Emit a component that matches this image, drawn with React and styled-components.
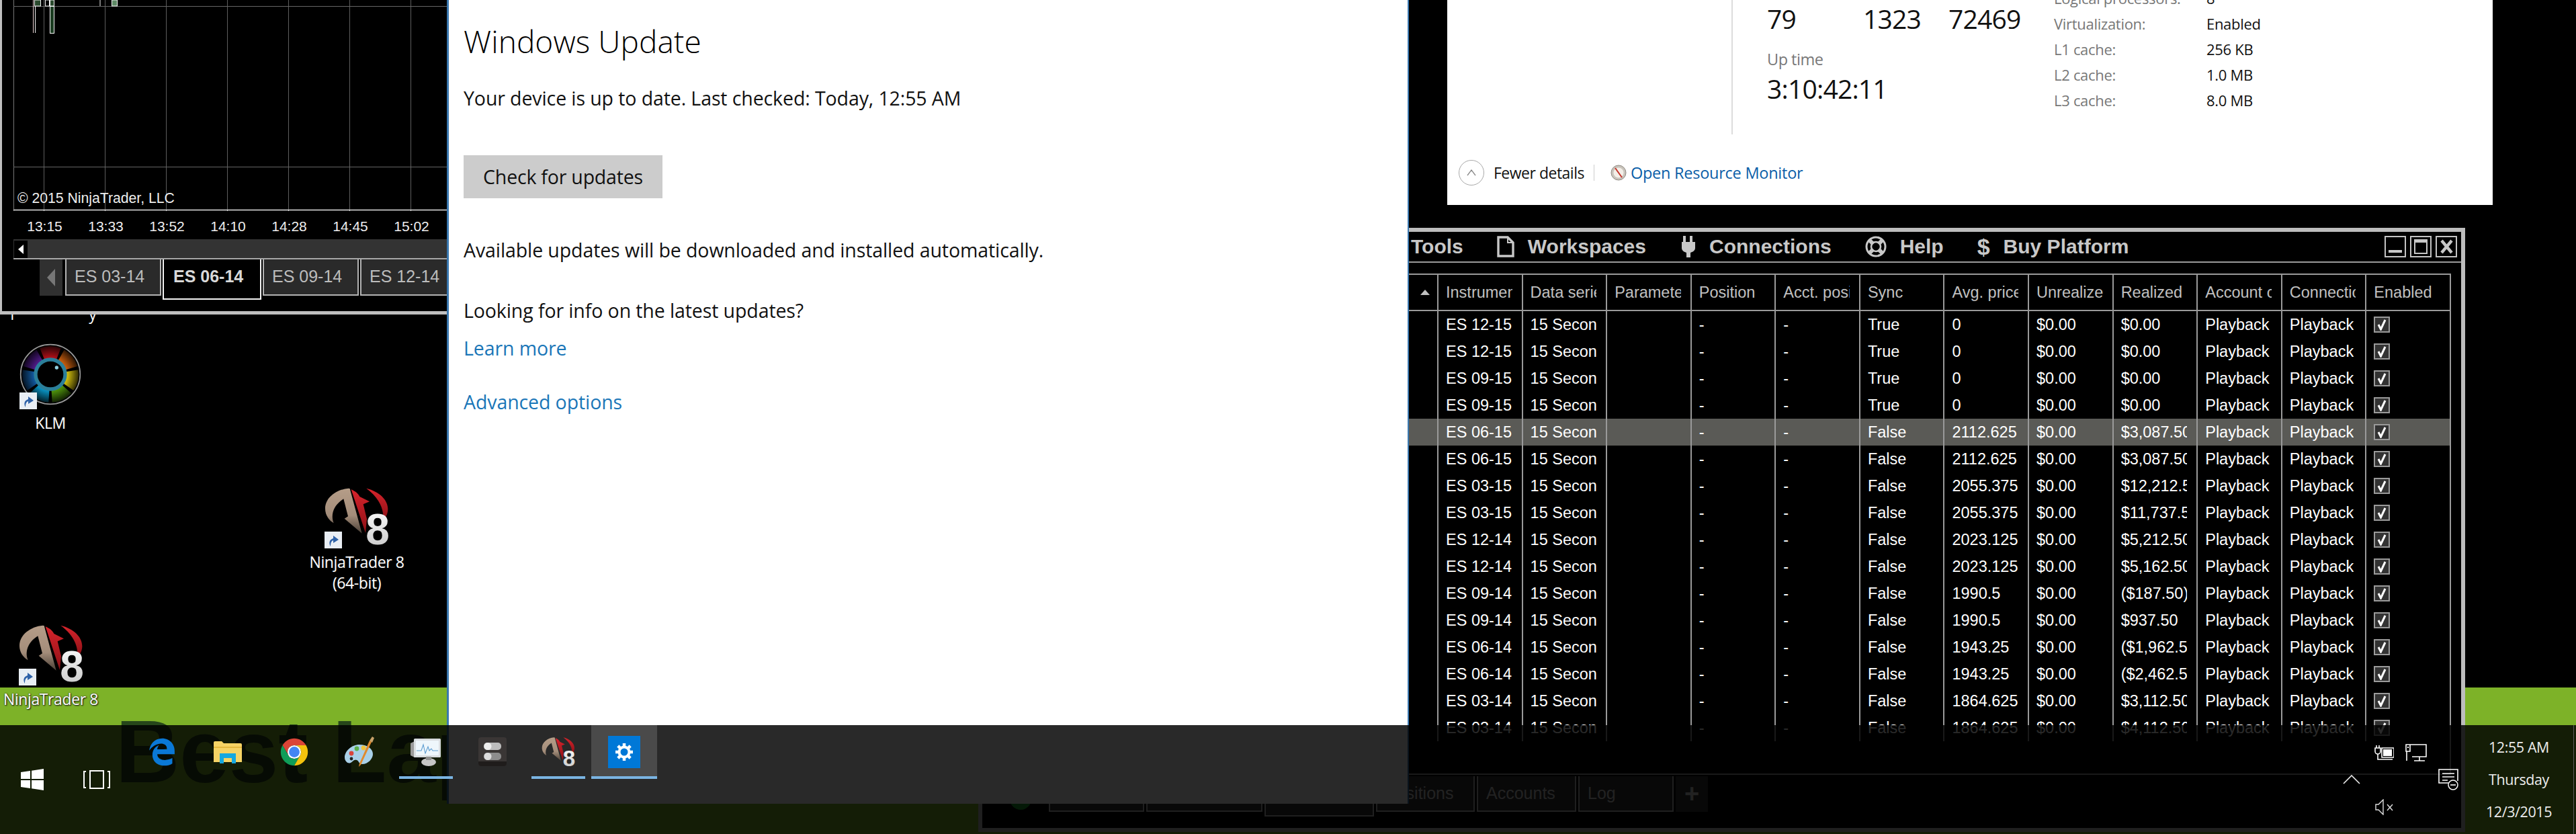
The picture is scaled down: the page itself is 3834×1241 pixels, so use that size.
import React from "react";
import styled, { createGlobalStyle } from "styled-components";
import { FaEdgeLegacy } from "react-icons/fa";

const GlobalStyle = createGlobalStyle`
  html, body {
    margin: 0;
    padding: 0;
    background: #000;
  }
  * {
    box-sizing: border-box;
  }
`;

const SEGOE = `"Open Sans", "Noto Sans", sans-serif`;
const ARIAL = `"Liberation Sans", Arial, sans-serif`;

const TIMES = ["13:15", "13:33", "13:52", "14:10", "14:28", "14:45", "15:02"];

const COLUMNS = [
  "Instrument",
  "Data series",
  "Parameters",
  "Position",
  "Acct. position",
  "Sync",
  "Avg. price",
  "Unrealized",
  "Realized",
  "Account connection",
  "Connection",
  "Enabled",
];

const ROWS = [
  ["ES 12-15", "True", "0", "$0.00"],
  ["ES 12-15", "True", "0", "$0.00"],
  ["ES 09-15", "True", "0", "$0.00"],
  ["ES 09-15", "True", "0", "$0.00"],
  ["ES 06-15", "False", "2112.625", "$3,087.50"],
  ["ES 06-15", "False", "2112.625", "$3,087.50"],
  ["ES 03-15", "False", "2055.375", "$12,212.50"],
  ["ES 03-15", "False", "2055.375", "$11,737.50"],
  ["ES 12-14", "False", "2023.125", "$5,212.50"],
  ["ES 12-14", "False", "2023.125", "$5,162.50"],
  ["ES 09-14", "False", "1990.5", "($187.50)"],
  ["ES 09-14", "False", "1990.5", "$937.50"],
  ["ES 06-14", "False", "1943.25", "($1,962.50)"],
  ["ES 06-14", "False", "1943.25", "($2,462.50)"],
  ["ES 03-14", "False", "1864.625", "$3,112.50"],
  ["ES 03-14", "False", "1864.625", "$4,112.50"],
];

const SPECS = [
  ["Logical processors:", "8"],
  ["Virtualization:", "Enabled"],
  ["L1 cache:", "256 KB"],
  ["L2 cache:", "1.0 MB"],
  ["L3 cache:", "8.0 MB"],
];

function ShortcutBadge() {
  return (
    <Badge>
      <svg width="20" height="20" viewBox="0 0 20 20">
        <path d="M6 19c-3-5-2-10 4-12V3l8 6-8 5v-4c-3 1-4 4-4 9z" fill="#2f62a8" />
      </svg>
    </Badge>
  );
}

function KlmLogo() {
  const colors = ["#c8121c", "#e36a10", "#f2dc10", "#5aa80e", "#0aa6dc", "#1464b4", "#5a1e9a"];
  const wedge = (i) => {
    const a0 = ((i * 360) / 7 - 90 - 22) * (Math.PI / 180);
    const a1 = ((i * 360) / 7 - 90 + 22) * (Math.PI / 180);
    const p = (r, a) => `${(r * Math.cos(a)).toFixed(1)} ${(r * Math.sin(a)).toFixed(1)}`;
    return `M${p(60, a0)} L${p(126, a0)} A126 126 0 0 1 ${p(126, a1)} L${p(60, a1)} Z`;
  };
  return (
    <svg width="92" height="94" viewBox="-138 -141 276 282">
      <defs>
        <radialGradient id="klmFade" cx="0" cy="0" r="130" gradientUnits="userSpaceOnUse">
          <stop offset="0.5" stopColor="#000" stopOpacity="0" />
          <stop offset="1" stopColor="#000" stopOpacity="0.85" />
        </radialGradient>
      </defs>
      <circle r="133" fill="#000" stroke="#9a9a9a" strokeWidth="5" />
      {colors.map((c, i) => (
        <path key={c} d={wedge(i)} fill={c} />
      ))}
      <circle r="128" fill="url(#klmFade)" />
      <circle r="66" fill="#000" stroke="#2b7f9a" strokeWidth="16" />
      <circle cx="28" cy="-30" r="8" fill="#8fd0e0" />
    </svg>
  );
}

function NinjaLogo({ width = 96, height = 85 }) {
  return (
    <svg width={width} height={height} viewBox="39 33 288 255">
      <defs>
        <linearGradient id="ntTaupe" x1="0" y1="0" x2="0" y2="1">
          <stop offset="0" stopColor="#b59d88" />
          <stop offset="0.6" stopColor="#a48d7a" />
          <stop offset="1" stopColor="#4a3f36" />
        </linearGradient>
        <linearGradient id="ntRed" x1="0" y1="0" x2="0" y2="1">
          <stop offset="0" stopColor="#d8242c" />
          <stop offset="1" stopColor="#8c1016" />
        </linearGradient>
        <linearGradient id="ntEight" x1="0" y1="0" x2="0" y2="1">
          <stop offset="0" stopColor="#ffffff" />
          <stop offset="1" stopColor="#c4c4c4" />
        </linearGradient>
      </defs>
      <path
        d="M146 35C92 40 42 76 42 126c0 26 14 50 38 64-14-34-4-78 44-108l20 78-16 10 78 66L152 36z"
        fill="url(#ntTaupe)"
      />
      <path d="M158 40c18 8 32 18 38 32l44 22-28 12 16 66-6 62z" fill="url(#ntRed)" />
      <path d="M226 35c58 14 96 52 96 92 0 20-8 38-22 48 6-42-14-96-74-140z" fill="url(#ntRed)" />
      <text x="276" y="284" textAnchor="middle" fontFamily={ARIAL} fontWeight="700" fontSize="192" fill="url(#ntEight)">
        8
      </text>
    </svg>
  );
}

function Chrome() {
  return (
    <svg width="44" height="44" viewBox="0 0 48 48">
      <path d="M43.05 13A22 22 0 0 0 4.95 13L14.47 29.5A11 11 0 0 1 24 13Z" fill="#db4437" />
      <path d="M4.95 13A22 22 0 0 0 24 46L33.53 29.5A11 11 0 0 1 14.47 29.5Z" fill="#0f9d58" />
      <path d="M24 46A22 22 0 0 0 43.05 13H24A11 11 0 0 1 33.53 29.5Z" fill="#f4c20d" />
      <circle cx="24" cy="24" r="11" fill="#fff" />
      <circle cx="24" cy="24" r="8.6" fill="#4285f4" />
    </svg>
  );
}

function Explorer() {
  return (
    <svg width="42" height="34" viewBox="0 0 42 34">
      <path d="M0 3a2 2 0 0 1 2-2h10l3 3h25a2 2 0 0 1 2 2v26H0z" fill="#f6d365" />
      <path d="M0 9h42v2H0z" fill="#e5b93f" />
      <path d="M9 34V19h24v15h-6v-8H15v8z" fill="#16a8e0" />
    </svg>
  );
}

function Palette() {
  return (
    <svg width="46" height="46" viewBox="0 0 46 46">
      <path
        d="M22 12C10 12 0 22 0 31c0 6 5 10 9 8s4-5 9-4c3 1 3 6 8 6 9 0 16-8 16-15 0-8-9-14-20-14z"
        fill="#a9d0e8"
      />
      <circle cx="10" cy="25" r="3.4" fill="#d9453c" />
      <circle cx="18" cy="18" r="3.4" fill="#5cb04d" />
      <circle cx="28" cy="17" r="3.4" fill="#f0c33a" />
      <circle cx="10" cy="33" r="2.4" fill="#222" />
      <path d="M40 8L24 42l-3 3 1-5L37 6z" fill="#e08a2e" />
      <path d="M37 6l4-6 3 2-3 7z" fill="#c9a36a" />
    </svg>
  );
}

function Monitor() {
  return (
    <svg width="46" height="42" viewBox="0 0 46 42">
      <path d="M0 8l6-3v24l-6-3z" fill="#9a9a9a" />
      <rect x="5" y="1" width="40" height="28" rx="1.5" fill="#d9dde0" />
      <rect x="8" y="4" width="34" height="22" fill="#eef6fb" />
      <path d="M9 19h7l3-9 3 13 4-10 2 6 3-3 2 3h8" fill="none" stroke="#5b9bd0" strokeWidth="1.1" />
      <ellipse cx="27" cy="36" rx="11" ry="6" fill="#c6c6c6" />
      <rect x="23" y="28" width="8" height="5" fill="#8f8f8f" />
    </svg>
  );
}

function TaskSwitch() {
  return (
    <svg width="42" height="44" viewBox="0 0 42 44">
      <rect x="0" y="0" width="42" height="43" rx="4" fill="#3a3635" />
      <path d="M0 36h42v3a4 4 0 0 1-4 4H4a4 4 0 0 1-4-4z" fill="#1f1c1b" />
      <rect x="8" y="8" width="26" height="11" rx="5" fill="#bdbdbd" />
      <rect x="8" y="23" width="26" height="11" rx="5" fill="#8d8d8d" />
      <circle cx="14" cy="13.5" r="5.5" fill="#eee" />
      <circle cx="14" cy="28.5" r="5.5" fill="#ddd" />
    </svg>
  );
}

function Gear() {
  return (
    <svg width="26" height="26" viewBox="0 0 26 26">
      <g fill="none" stroke="#fff">
        <circle cx="13" cy="13" r="7.5" strokeWidth="4" />
        <path
          d="M13 0v5M13 21v5M0 13h5M21 13h5M3.8 3.8l3.5 3.5M18.7 18.7l3.5 3.5M3.8 22.2l3.5-3.5M18.7 7.3l3.5-3.5"
          strokeWidth="4.5"
        />
      </g>
    </svg>
  );
}

function Check() {
  return (
    <svg width="14" height="17" viewBox="0 0 14 17">
      <path d="M2 8l3.5 7L12 1" fill="none" stroke="#fff" strokeWidth="3" />
    </svg>
  );
}

function App() {
  return (
    <Desktop>
      <GlobalStyle />
      <WallText>Best Lap</WallText>

      <DesktopIcon $x={20} $y={510} $w={110}>
        <IconArt>
          <KlmLogo />
          <ShortcutBadge />
        </IconArt>
        <IconLabel>KLM</IconLabel>
      </DesktopIcon>
      <DesktopIcon $x={461} $y={726} $w={140}>
        <IconArt>
          <NinjaLogo />
          <ShortcutBadge />
        </IconArt>
        <IconLabel>
          NinjaTrader 8
          <br />
          (64-bit)
        </IconLabel>
      </DesktopIcon>
      <DesktopIcon $x={5} $y={930} $w={141}>
        <IconArt>
          <NinjaLogo />
          <ShortcutBadge />
        </IconArt>
        <IconLabel>NinjaTrader 8</IconLabel>
      </DesktopIcon>

      <PeekLabel>T&nbsp;&nbsp;&nbsp;&nbsp;&nbsp;&nbsp;&nbsp;&nbsp;&nbsp;&nbsp;&nbsp;&nbsp;&nbsp;&nbsp;&nbsp;&nbsp;&nbsp;&nbsp;y</PeekLabel>

      <ChartWindow>
        <ChartPlot>
          <svg width="780" height="314">
            {[0, 1, 2, 3, 4, 5, 6].map((i) => (
              <g key={i}>
                <line x1={45.5 + i * 91} x2={45.5 + i * 91} y1="0" y2="312" stroke="#5e5e5e" />
                <line x1={45.5 + i * 91} x2={45.5 + i * 91} y1="312" y2="314" stroke="#ddd" />
              </g>
            ))}
            <line x1="0.5" x2="0.5" y1="0" y2="314" stroke="#777" />
            <line x1="0" x2="780" y1="9.5" y2="9.5" stroke="#666" />
            <line x1="0" x2="780" y1="248.5" y2="248.5" stroke="#666" />
            <line x1="0" x2="780" y1="312.5" y2="312.5" stroke="#e4e4e4" strokeWidth="1.5" />
            <path d="M29.5 0v49" fill="none" stroke="#e8d0d0" />
            <path d="M32.5 9v40" fill="none" stroke="#f4f4f4" />
            <rect x="31.500" y="0" width="9" height="9" fill="#2a4a2e" stroke="#f4f4f4" />
            <rect x="47.500" y="0" width="6" height="9" fill="#000" stroke="#f4f4f4" />
            <rect x="54.500" y="0" width="6" height="9" fill="#2a4a2e" stroke="#f4f4f4" />
            <rect x="54.500" y="9.500" width="6" height="40" fill="#1c3d22" stroke="#f4f4f4" />
            <path d="M129 0v9" stroke="#eee" fill="none" />
            <rect x="146.500" y="0" width="8" height="9" fill="#5f8a66" stroke="#f4f4f4" />
          </svg>
          <Copyright>© 2015 NinjaTrader, LLC</Copyright>
        </ChartPlot>
        <AxisRow>
          {TIMES.map((t) => (
            <AxisTime key={t}>{t}</AxisTime>
          ))}
        </AxisRow>
        <ScrollTrack>
          <ScrollButton>
            <svg width="8" height="14" viewBox="0 0 8 14">
              <path d="M8 0v14L0 7z" fill="#fff" />
            </svg>
          </ScrollButton>
        </ScrollTrack>
        <ChartTabs>
          <TabArrow>
            <svg width="12" height="26" viewBox="0 0 12 26">
              <path d="M12 0v26L0 13z" fill="#777" />
            </svg>
          </TabArrow>
          <ChartTab>ES 03-14</ChartTab>
          <ChartTab $active>ES 06-14</ChartTab>
          <ChartTab>ES 09-14</ChartTab>
          <ChartTab $wide>ES 12-14</ChartTab>
        </ChartTabs>
      </ChartWindow>

      <TaskManager>
        <PerfGrid>
          <SideColumn />
          <StatsColumn>
            <Counters>
              <BigValue>79</BigValue>
              <BigValue>1323</BigValue>
              <BigValue>72469</BigValue>
            </Counters>
            <StatLabel>Up time</StatLabel>
            <BigValue>3:10:42:11</BigValue>
          </StatsColumn>
          <SpecList>
            {SPECS.map(([k, v]) => (
              <SpecRow key={k}>
                <SpecKey>{k}</SpecKey>
                <SpecValue>{v}</SpecValue>
              </SpecRow>
            ))}
          </SpecList>
        </PerfGrid>
        <TmFooter>
          <FewerCircle>
            <svg width="14" height="10" viewBox="0 0 14 10">
              <path d="M1 9l6-8 6 8" fill="none" stroke="#888" strokeWidth="1.3" />
            </svg>
          </FewerCircle>
          <FewerText>Fewer details</FewerText>
          <FooterSep />
          <svg width="24" height="24" viewBox="0 0 24 24">
            <circle cx="12" cy="12" r="11" fill="#c9c4bc" stroke="#8f8a82" />
            <circle cx="12" cy="12" r="7.5" fill="#f3efe8" />
            <path d="M7 5l10 14" stroke="#c4352c" strokeWidth="2" />
          </svg>
          <MonitorLink>Open Resource Monitor</MonitorLink>
        </TmFooter>
      </TaskManager>

      <ControlCenter>
        <TitleBar>
          <MenuItem>Tools</MenuItem>
          <MenuItem>
            <svg width="26" height="32" viewBox="0 0 26 32">
              <path d="M2 2h14l8 8v20H2z" fill="none" stroke="#c8c8c8" strokeWidth="3.4" />
              <path d="M16 2v8h8" fill="none" stroke="#c8c8c8" strokeWidth="2" />
            </svg>
            Workspaces
          </MenuItem>
          <MenuItem>
            <svg width="24" height="32" viewBox="0 0 24 32">
              <path
                d="M5 0h4v9h6V0h4v9h4v9c0 4-4 6-7 7v7H10v-7c-3-1-7-3-7-7V9h2z"
                fill="#c8c8c8"
              />
            </svg>
            Connections
          </MenuItem>
          <MenuItem>
            <svg width="32" height="32" viewBox="0 0 32 32">
              <circle cx="16" cy="16" r="14" fill="none" stroke="#c8c8c8" strokeWidth="3" />
              <circle cx="16" cy="16" r="7" fill="none" stroke="#c8c8c8" strokeWidth="2.6" />
              <path d="M6 6l6 6M26 6l-6 6M6 26l6-6M26 26l-6-6" stroke="#c8c8c8" strokeWidth="6" />
            </svg>
            Help
          </MenuItem>
          <MenuItem>
            <DollarMark>$</DollarMark>
            Buy Platform
          </MenuItem>
          <WindowButtons>
            <WindowButton>
              <MinimizeBar />
            </WindowButton>
            <WindowButton>
              <MaximizeBox />
            </WindowButton>
            <WindowButton>
              <svg width="19" height="22" viewBox="0 0 19 22">
                <path d="M2 2l15 18M17 2L2 20" stroke="#c8c8c8" strokeWidth="4.4" />
              </svg>
            </WindowButton>
          </WindowButtons>
        </TitleBar>

        <GridFrame>
          <HeaderRow>
            <SortCell>
              <svg width="14" height="8" viewBox="0 0 14 8">
                <path d="M7 0l7 8H0z" fill="#c0c0c0" />
              </svg>
            </SortCell>
            {COLUMNS.map((c) => (
              <Cell key={c} $header>
                <CellText>{c}</CellText>
              </Cell>
            ))}
          </HeaderRow>
          <GridBody>
            {ROWS.map(([inst, sync, avg, realized], i) => (
              <DataRow key={i} $selected={i === 4}>
                <SortCell />
                <Cell>
                  <CellText>{inst}</CellText>
                </Cell>
                <Cell>
                  <CellText>15 Second</CellText>
                </Cell>
                <Cell />
                <Cell>
                  <CellText>-</CellText>
                </Cell>
                <Cell>
                  <CellText>-</CellText>
                </Cell>
                <Cell>
                  <CellText>{sync}</CellText>
                </Cell>
                <Cell>
                  <CellText>{avg}</CellText>
                </Cell>
                <Cell>
                  <CellText>$0.00</CellText>
                </Cell>
                <Cell>
                  <CellText>{realized}</CellText>
                </Cell>
                <Cell>
                  <CellText>Playback</CellText>
                </Cell>
                <Cell>
                  <CellText>Playback</CellText>
                </Cell>
                <Cell>
                  <CheckBox>
                    <Check />
                  </CheckBox>
                </Cell>
              </DataRow>
            ))}
          </GridBody>
        </GridFrame>

        <BottomTabs>
          <StatusDot />
          <BottomTab $w={142}>Orders</BottomTab>
          <BottomTab $w={173}>Executions</BottomTab>
          <BottomTab $w={163} $active>
            Strategies
          </BottomTab>
          <BottomTab $w={147}>Positions</BottomTab>
          <BottomTab $w={148}>Accounts</BottomTab>
          <BottomTab $w={142}>Log</BottomTab>
          <PlusTab>+</PlusTab>
        </BottomTabs>
      </ControlCenter>

      <SettingsWindow>
        <SettingsTitle>Windows Update</SettingsTitle>
        <SettingsText $mt={40}>Your device is up to date. Last checked: Today, 12:55 AM</SettingsText>
        <CheckButton>Check for updates</CheckButton>
        <SettingsText $mt={57}>Available updates will be downloaded and installed automatically.</SettingsText>
        <SettingsText $mt={50}>Looking for info on the latest updates?</SettingsText>
        <SettingsLink $mt={16}>Learn more</SettingsLink>
        <SettingsLink $mt={40}>Advanced options</SettingsLink>
      </SettingsWindow>

      <Taskbar>
        <StartGroup>
          <StartCell>
            <svg width="34" height="32" viewBox="0 0 34 32">
              <path d="M0 5l14-2v12H0zM16 2.700L34 0v15H16zM0 17h14v12L0 27zM16 17h18v15l-18-2.700z" fill="#fff" />
            </svg>
          </StartCell>
          <StartCell>
            <svg width="40" height="28" viewBox="0 0 40 28">
              <path
                d="M4 2H1v24h3M36 2h3v24h-3M10 1h20v26H10z"
                fill="none"
                stroke="#fff"
                strokeWidth="2"
              />
            </svg>
          </StartCell>
        </StartGroup>
        <AppGroup>
          <AppTile>
            <FaEdgeLegacy size={42} color="#0a78d6" />
          </AppTile>
          <AppTile>
            <Explorer />
          </AppTile>
          <AppTile>
            <Chrome />
          </AppTile>
          <AppTile>
            <Palette />
          </AppTile>
          <AppTile $running>
            <Monitor />
          </AppTile>
          <AppTile>
            <TaskSwitch />
          </AppTile>
          <AppTile $running>
            <NinjaLogo width={50} height={44} />
          </AppTile>
          <AppTile $running $active>
            <GearTile>
              <Gear />
            </GearTile>
          </AppTile>
        </AppGroup>
        <Tray>
          <CaretCell>
            <svg width="26" height="14" viewBox="0 0 26 14">
              <path d="M1 13L13 1l12 12" fill="none" stroke="#eee" strokeWidth="1.6" />
            </svg>
          </CaretCell>
          <TrayIcons>
            <TrayIcon>
              <svg width="30" height="22" viewBox="0 0 30 22">
                <path d="M4 0v4M8 0v4M2 4h8v5a4 4 0 0 1-8 0zM6 13v8h22" fill="none" stroke="#fff" strokeWidth="1.6" />
                <path d="M12 4h18v14H12z" fill="none" stroke="#fff" strokeWidth="1.6" />
                <rect x="14" y="6" width="13" height="10" fill="#fff" />
              </svg>
            </TrayIcon>
            <TrayIcon>
              <svg width="32" height="26" viewBox="0 0 32 26">
                <path d="M7 1h24v18H10M1 1h6v10H1zM2 11v14M21 19v6M13 25h16" fill="none" stroke="#fff" strokeWidth="1.6" />
                <rect x="3" y="4" width="2" height="2" fill="#fff" />
              </svg>
            </TrayIcon>
            <TrayIcon>
              <svg width="27" height="24" viewBox="0 0 27 24">
                <path d="M1 8h4l7-7v22l-7-7H1z" fill="none" stroke="#ddd" strokeWidth="1.4" />
                <path d="M18 8l8 9M26 8l-8 9" stroke="#ddd" strokeWidth="1.4" />
              </svg>
            </TrayIcon>
          </TrayIcons>
          <ActionCell>
            <svg width="30" height="32" viewBox="0 0 30 32">
              <path d="M21 21H1V1h28v17" fill="none" stroke="#fff" strokeWidth="1.6" />
              <path d="M6 7h18M6 12h18M6 17h8" stroke="#fff" strokeWidth="1.6" />
              <circle cx="22" cy="24" r="7" fill="#000" stroke="#fff" strokeWidth="1.5" />
              <path d="M18 24h8" stroke="#fff" strokeWidth="1.6" />
            </svg>
          </ActionCell>
          <Clock>
            <ClockLine>12:55 AM</ClockLine>
            <ClockLine>Thursday</ClockLine>
            <ClockLine>12/3/2015</ClockLine>
          </Clock>
        </Tray>
      </Taskbar>
    </Desktop>
  );
}

const Desktop = styled.div`
  position: relative;
  width: 3834px;
  height: 1241px;
  overflow: hidden;
  background: linear-gradient(#000 1023px, #7db228 1023px);
`;

const WallText = styled.div`
  position: absolute;
  left: 172px;
  top: 1044px;
  font: 700 132px/150px ${ARIAL};
  color: #26461a;
  white-space: nowrap;
`;

const DesktopIcon = styled.div`
  position: absolute;
  left: ${(p) => p.$x}px;
  top: ${(p) => p.$y}px;
  width: ${(p) => p.$w}px;
  display: flex;
  flex-direction: column;
  align-items: center;
`;

const IconArt = styled.div`
  position: relative;
  display: flex;
`;

const Badge = styled.div`
  position: absolute;
  left: 0;
  bottom: -5px;
  width: 26px;
  height: 25px;
  display: flex;
  align-items: center;
  justify-content: center;
  background: #e9eef4;
`;

const IconLabel = styled.div`
  margin-top: 10px;
  font: 400 23px/31px ${SEGOE};
  letter-spacing: -0.4px;
  color: #fff;
  text-align: center;
  white-space: nowrap;
  text-shadow: 1px 1px 2px #111, 0 0 2px #222;
`;

const PeekLabel = styled.div`
  position: absolute;
  left: 12px;
  top: 452px;
  font: 400 23px/30px ${SEGOE};
  color: #fff;
  white-space: nowrap;
`;

const ChartWindow = styled.div`
  position: absolute;
  left: 0;
  top: 0;
  width: 800px;
  height: 468px;
  padding-left: 17px;
  border-left: 3px solid #bfbfbf;
  border-bottom: 5px solid #bfbfbf;
  background: #000;
  display: flex;
  flex-direction: column;
`;

const ChartPlot = styled.div`
  position: relative;
  height: 312px;
  flex: none;
  svg {
    display: block;
    height: 314px;
  }
`;

const Copyright = styled.div`
  position: absolute;
  left: 6px;
  top: 282px;
  font: 400 21.200px/26px ${ARIAL};
  color: #eee;
  white-space: nowrap;
`;

const AxisRow = styled.div`
  height: 44px;
  flex: none;
  display: flex;
`;

const AxisTime = styled.div`
  width: 91px;
  flex: none;
  padding: 7px 0 0 2px;
  text-align: center;
  font: 400 21px/36px ${ARIAL};
  color: #eee;
`;

const ScrollTrack = styled.div`
  height: 30px;
  flex: none;
  padding: 2px 0 0 1px;
  background: #333;
  border-bottom: 2px solid #a8a8a8;
  display: flex;
`;

const ScrollButton = styled.div`
  width: 20px;
  height: 26px;
  display: flex;
  align-items: center;
  justify-content: center;
  background: #000;
`;

const ChartTabs = styled.div`
  display: flex;
  align-items: flex-start;
  padding-left: 39px;
  flex: none;
`;

const TabArrow = styled.div`
  width: 34px;
  height: 54px;
  margin-right: 4px;
  display: flex;
  align-items: center;
  justify-content: center;
  background: #303030;
`;

const ChartTab = styled.div`
  height: ${(p) => (p.$active ? "60px" : "54px")};
  width: ${(p) => (p.$active ? "147px" : p.$wide ? "260px" : "143px")};
  margin-right: 2px;
  padding: ${(p) => (p.$active ? "9px 0 0 14px" : "9px 0 0 12px")};
  border: 2px solid ${(p) => (p.$active ? "#f4f4f4" : "#b4b4b4")};
  border-top: none;
  background: ${(p) => (p.$active ? "#000" : "#2a2a2a")};
  font: ${(p) => (p.$active ? 700 : 400)} 25px/32px ${ARIAL};
  color: ${(p) => (p.$active ? "#d8d8d8" : "#bcbcbc")};
  white-space: nowrap;
  overflow: hidden;
`;

const TaskManager = styled.div`
  position: absolute;
  left: 2154px;
  top: -22px;
  width: 1556px;
  height: 327px;
  background: #fff;
  display: flex;
  flex-direction: column;
  overflow: hidden;
`;

const PerfGrid = styled.div`
  display: flex;
  height: 222px;
  flex: none;
`;

const SideColumn = styled.div`
  width: 425px;
  flex: none;
  border-right: 2px solid #dcdcdc;
`;

const StatsColumn = styled.div`
  width: 478px;
  flex: none;
  padding: 27px 0 0 51px;
`;

const Counters = styled.div`
  display: grid;
  grid-template-columns: 143px 127px auto;
`;

const BigValue = styled.div`
  font: 400 39px/46px ${SEGOE};
  letter-spacing: -0.8px;
  color: #111;
  white-space: nowrap;
`;

const StatLabel = styled.div`
  margin-top: 22px;
  margin-bottom: 6px;
  font: 400 23.500px/30px ${SEGOE};
  letter-spacing: -0.500px;
  color: #777;
`;

const SpecList = styled.div`
  display: flex;
  flex-direction: column;
`;

const SpecRow = styled.div`
  height: 38px;
  display: flex;
  align-items: center;
  font: 400 22px/38px ${SEGOE};
  letter-spacing: -0.300px;
  white-space: nowrap;
`;

const SpecKey = styled.div`
  width: 227px;
  color: #777;
`;

const SpecValue = styled.div`
  color: #111;
`;

const TmFooter = styled.div`
  display: flex;
  align-items: center;
  height: 38px;
  margin-top: 38px;
  padding-left: 17px;
`;

const FewerCircle = styled.div`
  width: 38px;
  height: 38px;
  border: 1.500px solid #a8a8a8;
  border-radius: 50%;
  display: flex;
  align-items: center;
  justify-content: center;
`;

const FewerText = styled.div`
  margin-left: 14px;
  font: 400 23px/38px ${SEGOE};
  letter-spacing: -0.500px;
  color: #111;
  white-space: nowrap;
`;

const FooterSep = styled.div`
  width: 1px;
  height: 24px;
  margin: 0 24px 0 14px;
  background: #ccc;
`;

const MonitorLink = styled.div`
  margin-left: 6px;
  font: 400 23.500px/38px ${SEGOE};
  letter-spacing: -0.250px;
  color: #0a5ea8;
  white-space: nowrap;
`;

const ControlCenter = styled.div`
  position: absolute;
  left: 1456px;
  top: 339px;
  width: 2213px;
  height: 899px;
  border: 6px solid #bdbdbd;
  background: #000;
  display: flex;
  flex-direction: column;
`;

const TitleBar = styled.div`
  height: 46px;
  flex: none;
  padding-left: 638px;
  border-bottom: 2px solid #9a9a9a;
  display: flex;
  align-items: center;
  gap: 50px;
`;

const MenuItem = styled.div`
  display: flex;
  align-items: center;
  gap: 20px;
  font: 700 30px/38px ${ARIAL};
  color: #c8c8c8;
  white-space: nowrap;
`;

const DollarMark = styled.span`
  font: 700 34px/38px ${ARIAL};
`;

const WindowButtons = styled.div`
  margin-left: auto;
  padding-right: 6px;
  display: flex;
  gap: 6px;
`;

const WindowButton = styled.div`
  width: 32px;
  height: 32px;
  border: 2px solid #c4c4c4;
  display: flex;
  align-items: center;
  justify-content: center;
`;

const MinimizeBar = styled.div`
  width: 20px;
  height: 4px;
  margin-top: 14px;
  background: #c8c8c8;
`;

const MaximizeBox = styled.div`
  width: 20px;
  height: 22px;
  border: 2px solid #c8c8c8;
  border-top-width: 5px;
`;

const GridFrame = styled.div`
  height: 746px;
  margin: 16px 15px 0 0;
  flex: none;
  border-top: 2px solid #9a9a9a;
  border-right: 2px solid #9a9a9a;
  border-bottom: 2px solid #9a9a9a;
  display: flex;
  flex-direction: column;
`;

const HeaderRow = styled.div`
  height: 54px;
  flex: none;
  display: grid;
  grid-template-columns: 677px repeat(12, 125.580px);
  border-bottom: 2px solid #9a9a9a;
`;

const GridBody = styled.div`
  height: 640px;
  flex: none;
  overflow: hidden;
`;

const DataRow = styled.div`
  height: 40px;
  display: grid;
  grid-template-columns: 677px repeat(12, 125.580px);
  background: ${(p) => (p.$selected ? "#5a5a56" : "transparent")};
`;

const SortCell = styled.div`
  display: flex;
  align-items: center;
  justify-content: flex-end;
  padding-right: 11px;
`;

const Cell = styled.div`
  min-width: 0;
  padding: 0 14px 0 11px;
  border-left: 2px solid #9a9a9a;
  display: flex;
  align-items: center;
  font: 400 23.500px/40px ${ARIAL};
  color: ${(p) => (p.$header ? "#c0c0c0" : "#fff")};
`;

const CellText = styled.div`
  overflow: hidden;
  white-space: nowrap;
`;

const CheckBox = styled.div`
  width: 24px;
  height: 24px;
  border: 2px solid #9a9a9a;
  background: #333;
  display: flex;
  align-items: center;
  justify-content: center;
`;

const BottomTabs = styled.div`
  display: flex;
  align-items: flex-start;
  margin-top: 2px;
  padding-left: 41px;
`;

const StatusDot = styled.div`
  width: 32px;
  height: 32px;
  margin: 18px 26px 0 0;
  border-radius: 50%;
  background: #1a9a30;
`;

const BottomTab = styled.div`
  width: ${(p) => p.$w}px;
  height: ${(p) => (p.$active ? "60px" : "53px")};
  margin-right: 3px;
  padding: 9px 0 0 12px;
  border: 2px solid #bdbdbd;
  border-top: none;
  background: #333;
  font: 400 25px/32px ${ARIAL};
  color: #d0d0d0;
  white-space: nowrap;
`;

const PlusTab = styled.div`
  width: 48px;
  height: 53px;
  text-align: center;
  background: #333;
  font: 700 38px/52px ${ARIAL};
  color: #d0d0d0;
`;

const SettingsWindow = styled.div`
  position: absolute;
  left: 665px;
  top: 0;
  width: 1432px;
  height: 1196px;
  padding: 36px 0 0 22px;
  border-left: 3px solid #3a78b0;
  border-right: 2px solid #3a78b0;
  background: #fff;
  display: flex;
  flex-direction: column;
  align-items: flex-start;
`;

const SettingsTitle = styled.div`
  font: 300 46px/50px ${SEGOE};
  letter-spacing: 0.100px;
  color: #000;
  white-space: nowrap;
`;

const SettingsText = styled.div`
  margin-top: ${(p) => p.$mt}px;
  font: 400 28.500px/40px ${SEGOE};
  letter-spacing: -0.100px;
  color: #111;
  white-space: nowrap;
`;

const SettingsLink = styled(SettingsText)`
  color: #1a76b8;
`;

const CheckButton = styled.div`
  width: 296px;
  height: 64px;
  margin-top: 65px;
  text-align: center;
  background: #cccccc;
  font: 400 28.500px/64px ${SEGOE};
  letter-spacing: -0.200px;
  color: #111;
  white-space: nowrap;
`;

const Taskbar = styled.div`
  position: absolute;
  left: 0;
  top: 1079px;
  width: 3834px;
  height: 162px;
  background: rgba(0, 0, 0, 0.84);
  display: flex;
`;

const StartGroup = styled.div`
  display: flex;
  flex: none;
`;

const StartCell = styled.div`
  width: 96px;
  display: flex;
  align-items: center;
  justify-content: center;
`;

const AppGroup = styled.div`
  display: flex;
  align-items: flex-start;
  flex: none;
`;

const AppTile = styled.div`
  position: relative;
  width: 98.300px;
  height: 80px;
  display: flex;
  align-items: center;
  justify-content: center;
  background: ${(p) => (p.$active ? "#4a4a4a" : "transparent")};
  &::after {
    content: "";
    display: ${(p) => (p.$running ? "block" : "none")};
    position: absolute;
    left: ${(p) => (p.$active ? "0" : "9px")};
    right: ${(p) => (p.$active ? "0" : "9px")};
    bottom: 0;
    height: 4px;
    background: #7ab4e2;
  }
`;

const GearTile = styled.div`
  width: 48px;
  height: 48px;
  display: flex;
  align-items: center;
  justify-content: center;
  background: #0078d7;
`;

const Tray = styled.div`
  margin-left: auto;
  flex: none;
  width: 355px;
  margin-right: 3px;
  border-right: 1px solid #5a5a5a;
  display: flex;
`;

const CaretCell = styled.div`
  width: 48px;
  display: flex;
  align-items: center;
  justify-content: center;
`;

const TrayIcons = styled.div`
  width: 96px;
  display: grid;
  grid-template-columns: 48px 48px;
  grid-template-rows: 81px 81px;
`;

const TrayIcon = styled.div`
  display: flex;
  align-items: center;
  justify-content: center;
`;

const ActionCell = styled.div`
  width: 48px;
  display: flex;
  align-items: center;
  justify-content: center;
`;

const Clock = styled.div`
  flex: 1;
  padding-top: 9px;
  display: flex;
  flex-direction: column;
  align-items: center;
`;

const ClockLine = styled.div`
  font: 400 21.500px/48px ${SEGOE};
  letter-spacing: -0.400px;
  color: #ececec;
  white-space: nowrap;
`;

export default App;
